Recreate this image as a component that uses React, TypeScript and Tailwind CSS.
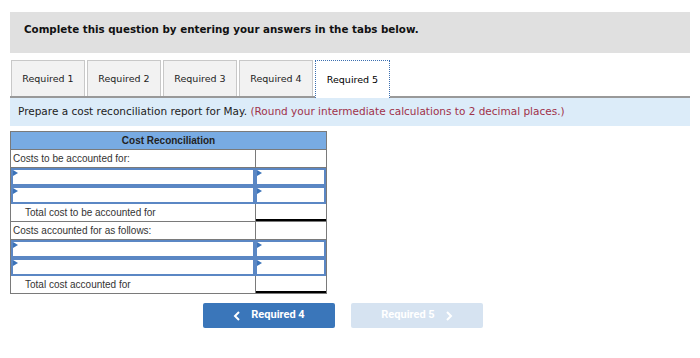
import React from 'react'

const tabs = ['Required 1', 'Required 2', 'Required 3', 'Required 4', 'Required 5']

function Marker() {
    return <span className="absolute left-0 top-0 w-0 h-0 border-y-[3px] border-y-transparent border-l-[5px] border-l-[#3b73b9]" />
}

function InputRow() {
    return (
        <div className="flex h-[18px]">
            <div className="relative w-[245px] border-2 border-[#5b87c4]">
                <Marker />
            </div>
            <div className="relative w-[71px] border-2 border-[#5b87c4]">
                <Marker />
            </div>
        </div>
    )
}

function TextRow({ label, indent, total }: { label: string; indent?: boolean; total?: boolean }) {
    return (
        <div className="flex h-[18px] border-b border-[#7a7a7a]">
            <div className={`w-[245px] border-r border-[#7a7a7a] text-[10px] leading-[17px] text-[#333] ${indent ? 'pl-[14px]' : 'pl-[2px]'}`}>
                {label}
            </div>
            <div className={`w-[70px] ${total ? 'border-b-2 border-black' : ''}`} />
        </div>
    )
}

export default function App() {
    return (
        <div className="w-[700px] h-[358px] bg-white pt-3 px-[10px]" style={{ fontFamily: 'Verdana, "DejaVu Sans", sans-serif' }}>
            {/* Instruction header */}
            <div className="h-[41px] bg-[#e0e0e0] pl-[14px] pt-[10px] text-[10.3px] leading-[14px] font-bold text-[#111]">
                Complete this question by entering your answers in the tabs below.
            </div>

            {/* Tabs */}
            <div className="mt-[7px] flex gap-[2px] pl-[1px] border-b-2 border-[#999] h-[38px]">
                {tabs.map((t, i) =>
                    i === 4 ? (
                        <div key={t} className="w-[75px] h-[38px] -mb-[2px] pt-[1px] bg-white border border-dotted border-[#3b6fb0] border-b-0 flex items-center justify-center text-[9.5px] text-black">
                            {t}
                        </div>
                    ) : (
                        <div key={t} className="w-[74px] h-[36px] pt-[2px] bg-[#f2f2f2] border border-[#c8c8c8] border-b-0 flex items-center justify-center text-[9.5px] text-[#222]">
                            {t}
                        </div>
                    )
                )}
            </div>

            <div className="h-[28px] bg-[#dcecf9] pl-[8px] flex items-center text-[10.5px] text-[#222]">
                Prepare a cost reconciliation report for May.&nbsp;<span className="text-[#a0324a]">(Round your intermediate calculations to 2 decimal places.)</span>
            </div>

            {/* Table */}
            <div className="mt-[5px] w-[317px] border border-[#7a7a7a] border-b-0" style={{ fontFamily: 'Arial, "Liberation Sans", sans-serif' }}>
                <div className="h-[18px] bg-[#78abe3] border-b border-[#7a7a7a] text-center text-[10px] font-bold leading-[17px] text-[#222]">
                    Cost Reconciliation
                </div>
                <TextRow label="Costs to be accounted for:" />
                <InputRow />
                <InputRow />
                <TextRow label="Total cost to be accounted for" indent total />
                <TextRow label="Costs accounted for as follows:" />
                <InputRow />
                <InputRow />
                <TextRow label="Total cost accounted for" indent total />
            </div>

            {/* Nav buttons */}
            <div className="mt-[9px] ml-[193px] flex gap-4" style={{ fontFamily: 'Roboto, sans-serif' }}>
                <div className="w-[132px] h-[25px] bg-[#3a76ba] rounded-[2px] flex items-center justify-center gap-[10px] text-white text-[11px] font-bold">
                    <svg width="8" height="10" viewBox="0 0 8 10"><path d="M6 1 L2 5 L6 9" stroke="white" strokeWidth="2" fill="none" /></svg>
                    Required 4
                </div>
                <div className="w-[132px] h-[25px] bg-[#d6e3f1] rounded-[2px] flex items-center justify-center gap-[10px] text-white text-[11px] font-bold">
                    Required 5
                    <svg width="8" height="10" viewBox="0 0 8 10"><path d="M2 1 L6 5 L2 9" stroke="white" strokeWidth="2" fill="none" /></svg>
                </div>
            </div>
        </div>
    )
}
